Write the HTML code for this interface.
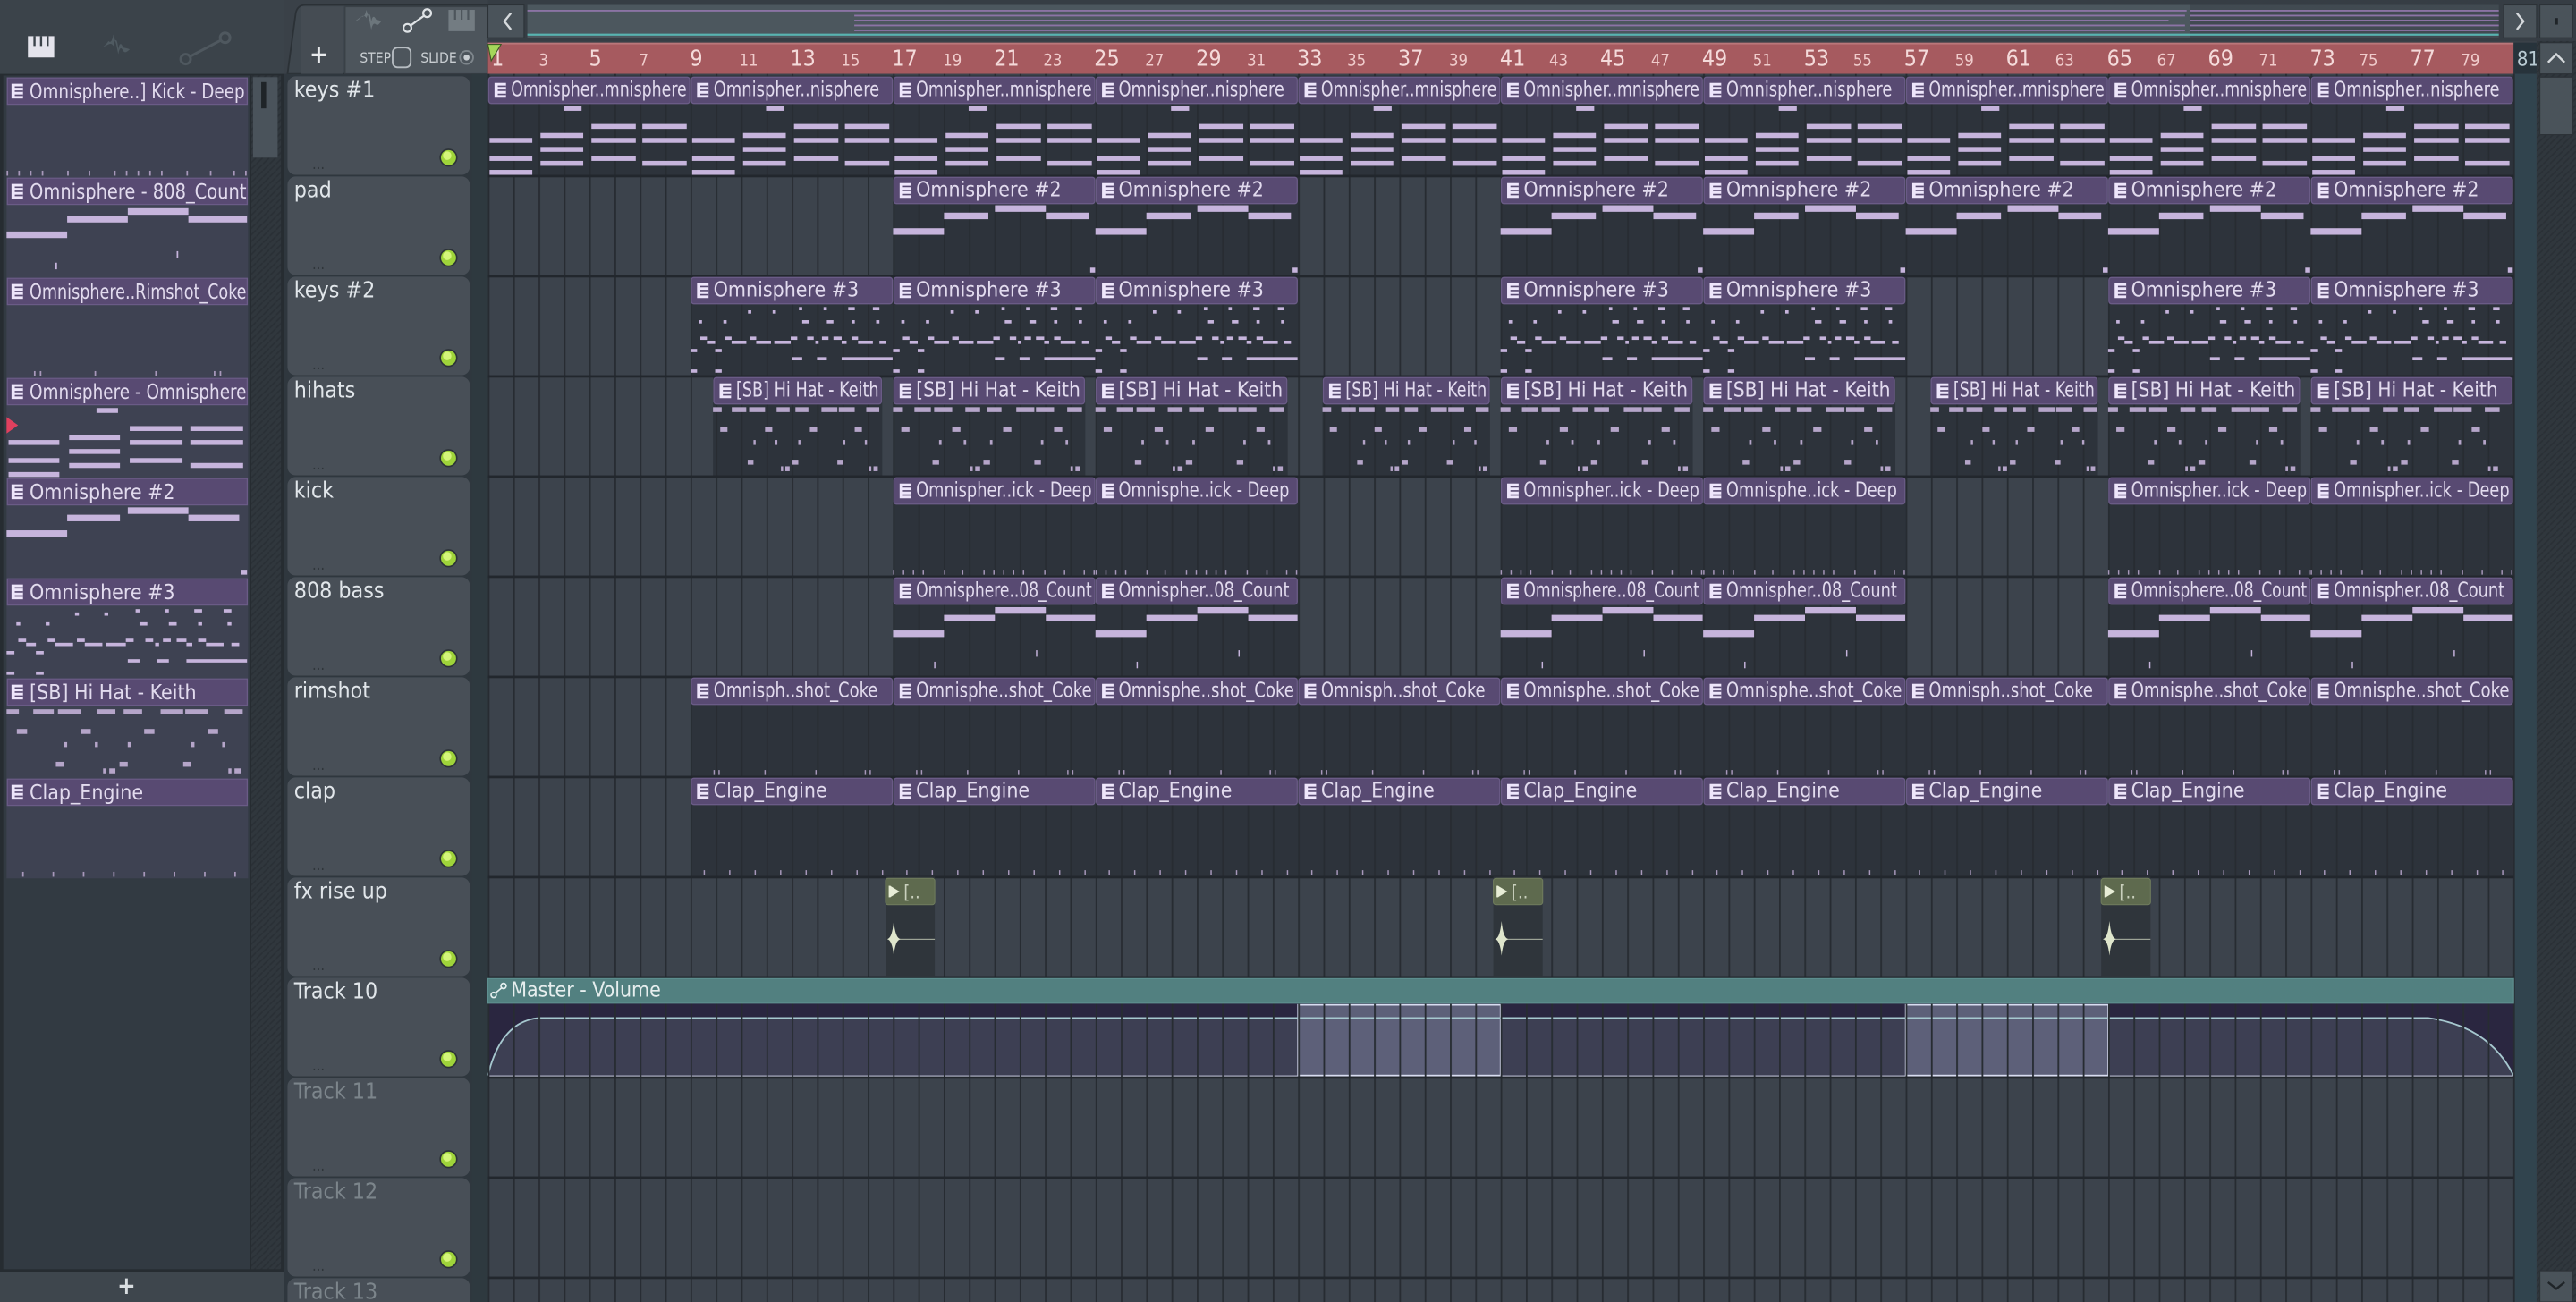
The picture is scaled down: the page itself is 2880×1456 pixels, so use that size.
<!DOCTYPE html>
<html><head><meta charset="utf-8"><style>
html,body{margin:0;padding:0;background:#3a4148;overflow:hidden}
svg{display:block}
text{font-family:"DejaVu Sans Condensed","DejaVu Sans","Liberation Sans",sans-serif;font-stretch:condensed}
</style></head><body>
<svg width="2880" height="1456" viewBox="0 0 1568 793" preserveAspectRatio="none" xmlns="http://www.w3.org/2000/svg">
<defs>
<pattern id="gl" x="297" y="0" width="15.41" height="10" patternUnits="userSpaceOnUse"><rect x="0" y="0" width="1" height="10" fill="#272c32"/></pattern>
<pattern id="hatch" width="4" height="4" patternUnits="userSpaceOnUse"><rect width="4" height="4" fill="#30373d"/><path d="M0 4L4 0" stroke="#2a3036" stroke-width="1"/></pattern>
<symbol id="ic" overflow="visible"><rect x="0" y="0" width="7" height="9" fill="#eee6fb"/><path d="M2 2h5M2 4.5h5M2 7h5" stroke="#584a72" stroke-width="0.9"/></symbol>
<symbol id="led" overflow="visible"><circle cx="0" cy="0" r="5.5" fill="#2c3238"/><circle cx="0" cy="0" r="4.6" fill="#9fd43a"/><circle cx="-0.8" cy="-1.2" r="2.6" fill="#d4f57a"/></symbol>
<g id="hdr"><rect x="0.5" y="1" width="122.3" height="16" rx="1.5" fill="#584a72" stroke="#6a5b86" stroke-width="0.7"/><use href="#ic" x="4" y="4.5"/></g>
<g id="k1" fill="#c6b4dc">
<rect x="1" y="38" width="26" height="3"/><rect x="1" y="49" width="26" height="3"/><rect x="1" y="57.5" width="26" height="3"/>
<rect x="32" y="35" width="26" height="3"/><rect x="32" y="43.5" width="26" height="3"/><rect x="32" y="52" width="26" height="3"/><rect x="46" y="18.5" width="11" height="3"/>
<rect x="63" y="29.5" width="27" height="3"/><rect x="63" y="38" width="27" height="3"/><rect x="63" y="49" width="27" height="3"/>
<rect x="94" y="29.5" width="27" height="3"/><rect x="94" y="38" width="27" height="3"/><rect x="94" y="52" width="27" height="3"/>
</g>
<g id="pd" fill="#c6b4dc"><rect x="0" y="32" width="31" height="4"/><rect x="31" y="22.5" width="27" height="4"/><rect x="62" y="18" width="31" height="4"/><rect x="93" y="22.5" width="26" height="4"/><rect x="120" y="56" width="3" height="3"/></g>
<g id="k2" fill="#c6b4dc">
<rect x="5" y="27" width="2" height="2"/><rect x="20" y="27" width="2" height="2"/><rect x="35" y="21" width="2" height="2"/><rect x="50" y="21" width="2" height="2"/><rect x="66" y="19" width="2" height="2"/><rect x="81" y="19" width="2" height="2"/><rect x="96" y="19" width="4" height="2"/><rect x="111" y="19" width="4" height="2"/><rect x="68" y="27" width="4" height="2"/><rect x="83" y="27" width="4" height="2"/><rect x="98" y="27" width="2" height="2"/><rect x="113" y="27" width="2" height="2"/>
<rect x="6" y="37" width="4" height="2"/><rect x="10" y="39.5" width="5" height="2"/><rect x="21" y="37" width="4" height="2"/><rect x="25" y="39.5" width="9" height="2"/><rect x="36" y="37" width="4" height="2"/><rect x="40" y="39.5" width="9" height="2"/><rect x="51" y="39.5" width="10" height="2"/><rect x="61" y="37" width="4" height="2"/><rect x="71" y="37" width="4" height="2"/><rect x="76" y="39.5" width="2" height="2"/><rect x="80" y="37" width="4" height="2"/><rect x="87" y="37" width="5" height="2"/><rect x="92" y="39.5" width="3" height="2"/><rect x="98" y="37" width="4" height="2"/><rect x="102" y="39.5" width="9" height="2"/><rect x="115" y="39.5" width="4" height="2"/>
<rect x="0" y="44.5" width="4" height="2"/><rect x="15" y="44.5" width="4" height="2"/><rect x="62" y="49.5" width="6" height="2"/><rect x="77" y="49.5" width="6" height="2"/><rect x="92" y="49.5" width="31" height="2"/><rect x="0" y="57" width="4" height="2"/><rect x="15" y="57" width="4" height="2"/>
</g>
<g id="hh" fill="#b5a5c9">
<rect x="0" y="19" width="6" height="3"/><rect x="13" y="19" width="10" height="3"/><rect x="25" y="19" width="11" height="3"/><rect x="44" y="19" width="9" height="3"/><rect x="57" y="19" width="9" height="3"/><rect x="75" y="19" width="11" height="3"/><rect x="87" y="19" width="11" height="3"/><rect x="106" y="19" width="9" height="3"/>
<rect x="5" y="31" width="5" height="3"/><rect x="36" y="31" width="5" height="3"/><rect x="67" y="31" width="5" height="3"/><rect x="98" y="31" width="5" height="3"/>
<rect x="28" y="39" width="1.5" height="3"/><rect x="43" y="39" width="1.5" height="3"/><rect x="59" y="39" width="1.5" height="3"/><rect x="90" y="39" width="1.5" height="3"/><rect x="105" y="39" width="1.5" height="3"/>
<rect x="24" y="51" width="4" height="3"/><rect x="55" y="51" width="4" height="3"/><rect x="86" y="51" width="4" height="3"/><rect x="47" y="55" width="1.5" height="3"/><rect x="50" y="55" width="3" height="3"/><rect x="108" y="55" width="1.5" height="3"/><rect x="111" y="55" width="3" height="3"/>
</g>
<g id="bs" fill="#c6b4dc"><rect x="0" y="33" width="31" height="4"/><rect x="31" y="23.5" width="31" height="4"/><rect x="62" y="18.8" width="31" height="4"/><rect x="93" y="23.5" width="30" height="4"/><rect x="87" y="45" width="0.8" height="4"/><rect x="25" y="52" width="0.8" height="4"/></g>
<g id="tk" fill="#a898bb"><rect x="8" y="57" width="0.8" height="3"/><rect x="23.5" y="57" width="0.8" height="3"/><rect x="39" y="57" width="0.8" height="3"/><rect x="54.5" y="57" width="0.8" height="3"/><rect x="70" y="57" width="0.8" height="3"/><rect x="85.5" y="57" width="0.8" height="3"/><rect x="101" y="57" width="0.8" height="3"/><rect x="116.5" y="57" width="0.8" height="3"/></g>
<g id="rk" fill="#a898bb"><rect x="14" y="57" width="0.8" height="3"/><rect x="17" y="57" width="0.8" height="3"/><rect x="45" y="57" width="0.8" height="3"/><rect x="76" y="57" width="0.8" height="3"/><rect x="106" y="57" width="0.8" height="3"/><rect x="109" y="57" width="0.8" height="3"/></g>
<g id="kk" fill="#a898bb"><rect x="0" y="57" width="0.8" height="3"/><rect x="6" y="57" width="0.8" height="3"/><rect x="12" y="57" width="0.8" height="3"/><rect x="18" y="57" width="0.8" height="3"/><rect x="31" y="57" width="0.8" height="3"/><rect x="42" y="57" width="0.8" height="3"/><rect x="55" y="57" width="0.8" height="3"/><rect x="61" y="57" width="0.8" height="3"/><rect x="67" y="57" width="0.8" height="3"/><rect x="73" y="57" width="0.8" height="3"/><rect x="79" y="57" width="0.8" height="3"/><rect x="92" y="57" width="0.8" height="3"/><rect x="104" y="57" width="0.8" height="3"/><rect x="116" y="57" width="0.8" height="3"/><rect x="122" y="57" width="0.8" height="3"/></g>
<g id="fx"><rect x="0" y="0" width="30" height="61" fill="#2f353b"/><rect x="0" y="1" width="30" height="16" rx="1.5" fill="#5e6a4e" stroke="#6e7b5c" stroke-width="0.6"/><path d="M2.5 5.5v7" stroke="#e7edd6" stroke-width="1.1"/><path d="M3 6l5 3-5 3z M6 9h2" fill="#e7edd6" stroke="#e7edd6" stroke-width="0.6"/><text x="11" y="13" font-size="11" fill="#c9d0bd">[..</text><path d="M1 38 Q4 37.6 5 27 Q6 37.6 9 37.8 H30 V38.2 H9 Q6 38.4 5 48 Q4 38.4 1 38z" fill="#dfe6cc"/></g>
</defs>

<rect width="1568" height="793" fill="#3a4148"/>

<!-- left panel -->
<rect x="0" y="0" width="173" height="45" fill="#3b434a"/>
<g fill="#e4e4ec"><rect x="17" y="22" width="16" height="13"/></g>
<path d="M21 22v6M25 22v6M29 22v6" stroke="#3b434a" stroke-width="1.3"/>
<path d="M62 29 q3 -2 4 -4 q2 2 3 -4 q2 6 3 12 q1 -6 3 -2 q1 2 4 -1 q-3 -1 -4 -1 q-2 -5 -3 1 q-1 -10 -3 -2 q-1 -2 -3 -1z" fill="#4f5a61"/>
<circle cx="113" cy="36" r="3" fill="none" stroke="#4f585f" stroke-width="1.6"/><circle cx="137" cy="23" r="3" fill="none" stroke="#4f585f" stroke-width="1.6"/><path d="M115.5 34.5l19 -10" stroke="#4f585f" stroke-width="1.6"/>
<rect x="0" y="45" width="173" height="730" fill="#262c31"/>
<rect x="2" y="46" width="150" height="727" fill="#323a42"/>
<rect x="153" y="46" width="18" height="727" fill="url(#hatch)"/>
<rect x="154" y="47" width="15" height="49" fill="#4a535b"/>
<rect x="159" y="50" width="3" height="16" fill="#1f2428"/>
<rect x="0" y="775" width="173" height="18" fill="#3e464d"/>
<text x="77" y="788" font-size="15" fill="#d8dde0" text-anchor="middle" font-weight="bold">+</text>

<g font-size="12.5" fill="#e2dbee">
<g transform="translate(4,47)"><rect width="147" height="61" fill="#3e4252"/><rect x="0.5" y="0.5" width="146" height="16" fill="#584a72" stroke="#6a5b86" stroke-width="0.7"/><use href="#ic" x="3" y="4"/><text x="14" y="13" textLength="131" lengthAdjust="spacingAndGlyphs">Omnisphere..] Kick - Deep</text><g transform="scale(1.19,1)"><use href="#kk"/></g></g>
<g transform="translate(4,108)"><rect width="147" height="61" fill="#3e4252"/><rect x="0.5" y="0.5" width="146" height="16" fill="#584a72" stroke="#6a5b86" stroke-width="0.7"/><use href="#ic" x="3" y="4"/><text x="14" y="13" textLength="132" lengthAdjust="spacingAndGlyphs">Omnisphere - 808_Count</text><g transform="scale(1.19,1)"><use href="#bs"/></g></g>
<g transform="translate(4,169)"><rect width="147" height="61" fill="#3e4252"/><rect x="0.5" y="0.5" width="146" height="16" fill="#584a72" stroke="#6a5b86" stroke-width="0.7"/><use href="#ic" x="3" y="4"/><text x="14" y="13" textLength="132" lengthAdjust="spacingAndGlyphs">Omnisphere..Rimshot_Coke</text><g transform="scale(1.19,1)"><use href="#rk"/></g></g>
<g transform="translate(4,230)"><rect width="147" height="61" fill="#3e4252"/><rect x="0.5" y="0.5" width="146" height="16" fill="#584a72" stroke="#6a5b86" stroke-width="0.7"/><use href="#ic" x="3" y="4"/><text x="14" y="13" textLength="132" lengthAdjust="spacingAndGlyphs">Omnisphere - Omnisphere</text><g transform="scale(1.19,1)"><use href="#k1"/></g></g>
<g transform="translate(4,291)"><rect width="147" height="61" fill="#3e4252"/><rect x="0.5" y="0.5" width="146" height="16" fill="#584a72" stroke="#6a5b86" stroke-width="0.7"/><use href="#ic" x="3" y="4"/><text x="14" y="13">Omnisphere #2</text><g transform="scale(1.19,1)"><use href="#pd"/></g></g>
<g transform="translate(4,352)"><rect width="147" height="61" fill="#3e4252"/><rect x="0.5" y="0.5" width="146" height="16" fill="#584a72" stroke="#6a5b86" stroke-width="0.7"/><use href="#ic" x="3" y="4"/><text x="14" y="13">Omnisphere #3</text><g transform="scale(1.19,1)"><use href="#k2"/></g></g>
<g transform="translate(4,413)"><rect width="147" height="61" fill="#3e4252"/><rect x="0.5" y="0.5" width="146" height="16" fill="#584a72" stroke="#6a5b86" stroke-width="0.7"/><use href="#ic" x="3" y="4"/><text x="14" y="13">[SB] Hi Hat - Keith</text><g transform="scale(1.25,1)"><use href="#hh"/></g></g>
<g transform="translate(4,474)"><rect width="147" height="61" fill="#3e4252"/><rect x="0.5" y="0.5" width="146" height="16" fill="#584a72" stroke="#6a5b86" stroke-width="0.7"/><use href="#ic" x="3" y="4"/><text x="14" y="13">Clap_Engine</text><g transform="scale(1.19,1)"><use href="#tk"/></g></g>
</g>
<path d="M4 254l7 5-7 5z" fill="#e0405e"/>

<!-- top tabs -->
<path d="M175 45 L180 8 Q181 3 186 3 L297 3 L297 45z" fill="#3f474e" stroke="#2b3136" stroke-width="1"/>
<rect x="183" y="4" width="26" height="41" fill="#454c53"/>
<text x="194" y="38" font-size="15" fill="#e8eaec" text-anchor="middle" font-weight="bold">+</text>
<rect x="210" y="4" width="87" height="41" fill="#4d555c" stroke="#3a4147" stroke-width="0.8"/>
<path d="M216 13 q3 -1 4 -3 q2 1 3 -4 q2 6 3 12 q1 -5 3 -3 q1 1 3 -2 q-2 -1 -3 -1 q-2 -4 -3 1 q-1 -8 -3 -2 q-1 -2 -3 -1z" fill="#6c767c"/>
<circle cx="248" cy="17" r="2.4" fill="none" stroke="#dfe3e6" stroke-width="1.2"/><circle cx="260" cy="8" r="2.4" fill="none" stroke="#dfe3e6" stroke-width="1.2"/><path d="M250 15.5l8.2 -6" stroke="#dfe3e6" stroke-width="1.2"/>
<rect x="273" y="6" width="16" height="13" fill="#737c82"/><path d="M277 6v6M281 6v6M285 6v6" stroke="#4d555c" stroke-width="1.2"/>
<text x="219" y="38" font-size="8.5" fill="#c9ced2">STEP</text>
<rect x="239" y="29" width="11" height="12" rx="3" fill="none" stroke="#b7bdc2" stroke-width="1"/>
<text x="256" y="38" font-size="8.5" fill="#c9ced2">SLIDE</text>
<circle cx="284" cy="35" r="4" fill="none" stroke="#7e868c" stroke-width="1"/><circle cx="284" cy="35" r="1.8" fill="#c9ced2"/>

<!-- overview strip -->
<rect x="297" y="0" width="1271" height="25" fill="#363d44"/>
<rect x="297" y="3" width="22" height="20" fill="#4a535a" stroke="#2c3237" stroke-width="0.6"/>
<path d="M311 8l-4 5 4 5" fill="none" stroke="#d6dadd" stroke-width="1.3"/>
<rect x="321" y="3" width="1012" height="20" fill="#4c575e"/>
<rect x="1333" y="3" width="188" height="20" fill="#414a51"/>
<g fill="#8c74a6">
<rect x="321" y="6" width="1010" height="1"/><rect x="520" y="9" width="810" height="1"/><rect x="520" y="12" width="800" height="1"/><rect x="520" y="15" width="810" height="1"/><rect x="520" y="18" width="810" height="1"/>
<rect x="1333" y="6" width="188" height="1"/><rect x="1333" y="9" width="188" height="1"/><rect x="1333" y="12" width="188" height="1"/><rect x="1333" y="15" width="188" height="1"/><rect x="1333" y="18" width="188" height="1"/>
</g>
<rect x="321" y="20.5" width="1200" height="1.2" fill="#58b3b0"/>
<rect x="1524" y="3" width="20" height="20" fill="#4a535a" stroke="#2c3237" stroke-width="0.6"/>
<path d="M1532 8l4 5-4 5" fill="none" stroke="#d6dadd" stroke-width="1.3"/>
<rect x="1546" y="3" width="20" height="20" fill="#4a535a" stroke="#2c3237" stroke-width="0.6"/><rect x="1555" y="11" width="2" height="4" fill="#1f2428"/>

<!-- ruler -->
<rect x="297" y="26" width="1233" height="19" fill="#a65a5f"/>
<rect x="297" y="26" width="1233" height="1" fill="#b9777a"/>
<rect x="1530" y="26" width="15" height="19" fill="#27333b"/>
<text x="1532" y="40" font-size="12" fill="#b9cbd3">81</text>
<g fill="#f4dada" font-size="13.5">
<text x="299" y="40">1</text><text x="358.5" y="40">5</text><text x="420" y="40">9</text><text x="481" y="40">13</text><text x="543" y="40">17</text><text x="605" y="40">21</text><text x="666" y="40">25</text><text x="728" y="40">29</text><text x="789.5" y="40">33</text><text x="851" y="40">37</text><text x="913" y="40">41</text><text x="974" y="40">45</text><text x="1036" y="40">49</text><text x="1098" y="40">53</text><text x="1159" y="40">57</text><text x="1221" y="40">61</text><text x="1282.5" y="40">65</text><text x="1344" y="40">69</text><text x="1406" y="40">73</text><text x="1467" y="40">77</text>
</g>
<g fill="#f0cccc" font-size="10">
<text x="328" y="40">3</text><text x="389" y="40">7</text><text x="450" y="40">11</text><text x="512" y="40">15</text><text x="574" y="40">19</text><text x="635" y="40">23</text><text x="697" y="40">27</text><text x="759" y="40">31</text><text x="820" y="40">35</text><text x="882" y="40">39</text><text x="943" y="40">43</text><text x="1005" y="40">47</text><text x="1067" y="40">51</text><text x="1128" y="40">55</text><text x="1190" y="40">59</text><text x="1251" y="40">63</text><text x="1313" y="40">67</text><text x="1375" y="40">71</text><text x="1436" y="40">75</text><text x="1498" y="40">79</text>
</g>
<path d="M297 27h8l-6 10z" fill="#a4d65a" stroke="#3e5a26" stroke-width="0.6"/>

<!-- right scrollbar -->
<rect x="1530" y="45" width="14" height="748" fill="#31444e"/>
<rect x="1544" y="25" width="24" height="768" fill="url(#hatch)"/>
<rect x="1546" y="26" width="20" height="19" fill="#4a535a" stroke="#2c3237" stroke-width="0.6"/><path d="M1551 38l5-5 5 5" fill="none" stroke="#d6dadd" stroke-width="1.3"/>
<rect x="1546" y="47" width="20" height="35" fill="#4a535a" stroke="#2c3237" stroke-width="0.6"/>
<rect x="1546" y="774" width="20" height="19" fill="#4a535a" stroke="#2c3237" stroke-width="0.6"/><path d="M1551 781l5 4 5-4" fill="none" stroke="#1f2428" stroke-width="1.3"/>

<!-- track header column -->
<rect x="173" y="45" width="124" height="748" fill="#2f373e"/>
<rect x="287" y="45" width="10" height="748" fill="#2e393f"/>
<g fill="#484f57">
<rect x="175" y="46.5" width="111" height="60" rx="5"/><rect x="175" y="107.5" width="111" height="60" rx="5"/><rect x="175" y="168.5" width="111" height="60" rx="5"/><rect x="175" y="229.5" width="111" height="60" rx="5"/><rect x="175" y="290.5" width="111" height="60" rx="5"/><rect x="175" y="351.5" width="111" height="60" rx="5"/><rect x="175" y="412.5" width="111" height="60" rx="5"/><rect x="175" y="473.5" width="111" height="60" rx="5"/><rect x="175" y="534.5" width="111" height="60" rx="5"/><rect x="175" y="595.5" width="111" height="60" rx="5"/><rect x="175" y="656.5" width="111" height="60" rx="5"/><rect x="175" y="717.5" width="111" height="60" rx="5"/><rect x="175" y="778.5" width="111" height="20" rx="5"/>
</g>
<g font-size="13.5" fill="#e1e6ea">
<text x="179" y="59">keys #1</text><text x="179" y="120">pad</text><text x="179" y="181">keys #2</text><text x="179" y="242">hihats</text><text x="179" y="303">kick</text><text x="179" y="364">808 bass</text><text x="179" y="425">rimshot</text><text x="179" y="486">clap</text><text x="179" y="547">fx rise up</text><text x="179" y="608">Track 10</text>
</g>
<g font-size="13.5" fill="#7c858b"><text x="179" y="669">Track 11</text><text x="179" y="730">Track 12</text><text x="179" y="791">Track 13</text></g>
<g fill="#2f353a" font-size="9">
<text x="190" y="103">...</text><text x="190" y="164">...</text><text x="190" y="225">...</text><text x="190" y="286">...</text><text x="190" y="347">...</text><text x="190" y="408">...</text><text x="190" y="469">...</text><text x="190" y="530">...</text><text x="190" y="591">...</text><text x="190" y="652">...</text><text x="190" y="713">...</text><text x="190" y="774">...</text>
</g>
<use href="#led" x="273" y="96"/><use href="#led" x="273" y="157"/><use href="#led" x="273" y="218"/><use href="#led" x="273" y="279"/><use href="#led" x="273" y="340"/><use href="#led" x="273" y="401"/><use href="#led" x="273" y="462"/><use href="#led" x="273" y="523"/><use href="#led" x="273" y="584"/><use href="#led" x="273" y="645"/><use href="#led" x="273" y="706"/><use href="#led" x="273" y="767"/>

<!-- grid -->
<rect x="297" y="45" width="1233" height="748" fill="#3c434c"/>
<g fill="#2d333b">
<rect x="297" y="46" width="1233" height="61"/>
<rect x="543.6" y="107" width="246.6" height="61"/><rect x="913.4" y="107" width="246.6" height="61"/><rect x="1160" y="107" width="123.2" height="61"/><rect x="1283.2" y="107" width="246.6" height="61"/>
<rect x="420.3" y="168" width="369.9" height="61"/><rect x="913.4" y="168" width="246.6" height="61"/><rect x="1283.2" y="168" width="246.6" height="61"/>
<rect x="434" y="229" width="103" height="61"/><rect x="543.6" y="229" width="117" height="61"/><rect x="666.8" y="229" width="117" height="61"/><rect x="805" y="229" width="102" height="61"/><rect x="913.4" y="229" width="117" height="61"/><rect x="1036.7" y="229" width="117" height="61"/><rect x="1175" y="229" width="102" height="61"/><rect x="1283.2" y="229" width="117" height="61"/><rect x="1406.5" y="229" width="123.3" height="61"/>
<rect x="543.6" y="290" width="246.6" height="122"/><rect x="913.4" y="290" width="246.6" height="122"/><rect x="1283.2" y="290" width="246.6" height="122"/>
<rect x="420.3" y="412" width="1109.5" height="122"/>
</g>
<rect x="297" y="611" width="1233" height="45" fill="#2a2640"/>
<path d="M297 655 Q305 622 328 620 H1478 Q1515 625 1530 655z" fill="#3d3f53"/>
<rect x="790.1" y="612" width="123.3" height="43" fill="#5d6079" stroke="#d8dcf0" stroke-width="0.9"/>
<rect x="1160" y="612" width="123.3" height="43" fill="#5d6079" stroke="#d8dcf0" stroke-width="0.9"/>
<path d="M297 655 Q305 622 328 620 H1478 Q1515 625 1530 655" fill="none" stroke="#a6c8cf" stroke-width="1"/>
<path d="M297 655.5 H1530" stroke="#d8dcf0" stroke-width="1"/>
<rect x="297" y="45" width="1234" height="748" fill="url(#gl)"/>
<g fill="#22272d">
<rect x="297" y="106.5" width="1233" height="1.5"/><rect x="297" y="167.5" width="1233" height="1.5"/><rect x="297" y="228.5" width="1233" height="1.5"/><rect x="297" y="289.5" width="1233" height="1.5"/><rect x="297" y="350.5" width="1233" height="1.5"/><rect x="297" y="411.5" width="1233" height="1.5"/><rect x="297" y="472.5" width="1233" height="1.5"/><rect x="297" y="533.5" width="1233" height="1.5"/><rect x="297" y="594.5" width="1233" height="1.5"/><rect x="297" y="655.5" width="1233" height="1.5"/><rect x="297" y="716.5" width="1233" height="1.5"/><rect x="297" y="777.5" width="1233" height="1.5"/>
</g>
<rect x="297" y="596" width="1233" height="15" fill="#528080" stroke="#5f9090" stroke-width="0.6"/>
<circle cx="300.5" cy="606" r="1.6" fill="none" stroke="#e6f0f0" stroke-width="0.9"/><circle cx="306.5" cy="600.5" r="1.6" fill="none" stroke="#e6f0f0" stroke-width="0.9"/><path d="M301.6 604.8l3.8-3.2" stroke="#e6f0f0" stroke-width="0.9"/>
<text x="311" y="607" font-size="12.5" fill="#e6eeee">Master - Volume</text>

<g font-size="12.5" fill="#e2dbee">
<g transform="translate(297,46)"><use href="#hdr"/><use href="#k1"/><text x="14" y="12.5" textLength="107" lengthAdjust="spacingAndGlyphs">Omnispher..mnisphere</text></g>
<g transform="translate(420.3,46)"><use href="#hdr"/><use href="#k1"/><text x="14" y="12.5" textLength="101" lengthAdjust="spacingAndGlyphs">Omnispher..nisphere</text></g>
<g transform="translate(543.6,46)"><use href="#hdr"/><use href="#k1"/><text x="14" y="12.5" textLength="107" lengthAdjust="spacingAndGlyphs">Omnispher..mnisphere</text></g>
<g transform="translate(666.8,46)"><use href="#hdr"/><use href="#k1"/><text x="14" y="12.5" textLength="101" lengthAdjust="spacingAndGlyphs">Omnispher..nisphere</text></g>
<g transform="translate(790.1,46)"><use href="#hdr"/><use href="#k1"/><text x="14" y="12.5" textLength="107" lengthAdjust="spacingAndGlyphs">Omnispher..mnisphere</text></g>
<g transform="translate(913.4,46)"><use href="#hdr"/><use href="#k1"/><text x="14" y="12.5" textLength="107" lengthAdjust="spacingAndGlyphs">Omnispher..mnisphere</text></g>
<g transform="translate(1036.7,46)"><use href="#hdr"/><use href="#k1"/><text x="14" y="12.5" textLength="101" lengthAdjust="spacingAndGlyphs">Omnispher..nisphere</text></g>
<g transform="translate(1160,46)"><use href="#hdr"/><use href="#k1"/><text x="14" y="12.5" textLength="107" lengthAdjust="spacingAndGlyphs">Omnispher..mnisphere</text></g>
<g transform="translate(1283.2,46)"><use href="#hdr"/><use href="#k1"/><text x="14" y="12.5" textLength="107" lengthAdjust="spacingAndGlyphs">Omnispher..mnisphere</text></g>
<g transform="translate(1406.5,46)"><use href="#hdr"/><use href="#k1"/><text x="14" y="12.5" textLength="101" lengthAdjust="spacingAndGlyphs">Omnispher..nisphere</text></g>

<g transform="translate(543.6,107)"><use href="#hdr"/><use href="#pd"/><text x="14" y="12.5">Omnisphere #2</text></g>
<g transform="translate(666.8,107)"><use href="#hdr"/><use href="#pd"/><text x="14" y="12.5">Omnisphere #2</text></g>
<g transform="translate(913.4,107)"><use href="#hdr"/><use href="#pd"/><text x="14" y="12.5">Omnisphere #2</text></g>
<g transform="translate(1036.7,107)"><use href="#hdr"/><use href="#pd"/><text x="14" y="12.5">Omnisphere #2</text></g>
<g transform="translate(1160,107)"><use href="#hdr"/><use href="#pd"/><text x="14" y="12.5">Omnisphere #2</text></g>
<g transform="translate(1283.2,107)"><use href="#hdr"/><use href="#pd"/><text x="14" y="12.5">Omnisphere #2</text></g>
<g transform="translate(1406.5,107)"><use href="#hdr"/><use href="#pd"/><text x="14" y="12.5">Omnisphere #2</text></g>

<g transform="translate(420.3,168)"><use href="#hdr"/><use href="#k2"/><text x="14" y="12.5">Omnisphere #3</text></g>
<g transform="translate(543.6,168)"><use href="#hdr"/><use href="#k2"/><text x="14" y="12.5">Omnisphere #3</text></g>
<g transform="translate(666.8,168)"><use href="#hdr"/><use href="#k2"/><text x="14" y="12.5">Omnisphere #3</text></g>
<g transform="translate(913.4,168)"><use href="#hdr"/><use href="#k2"/><text x="14" y="12.5">Omnisphere #3</text></g>
<g transform="translate(1036.7,168)"><use href="#hdr"/><use href="#k2"/><text x="14" y="12.5">Omnisphere #3</text></g>
<g transform="translate(1283.2,168)"><use href="#hdr"/><use href="#k2"/><text x="14" y="12.5">Omnisphere #3</text></g>
<g transform="translate(1406.5,168)"><use href="#hdr"/><use href="#k2"/><text x="14" y="12.5">Omnisphere #3</text></g>

<g transform="translate(434,229)"><rect x="0.5" y="1" width="102" height="16" rx="1.5" fill="#584a72" stroke="#6a5b86" stroke-width="0.7"/><use href="#ic" x="4" y="4.5"/><use href="#hh" transform="scale(0.88,1)"/><text x="14" y="12.5" textLength="87" lengthAdjust="spacingAndGlyphs">[SB] Hi Hat - Keith</text></g>
<g transform="translate(543.6,229)"><rect x="0.5" y="1" width="116" height="16" rx="1.5" fill="#584a72" stroke="#6a5b86" stroke-width="0.7"/><use href="#ic" x="4" y="4.5"/><use href="#hh"/><text x="14" y="12.5" textLength="100" lengthAdjust="spacingAndGlyphs">[SB] Hi Hat - Keith</text></g>
<g transform="translate(666.8,229)"><rect x="0.5" y="1" width="116" height="16" rx="1.5" fill="#584a72" stroke="#6a5b86" stroke-width="0.7"/><use href="#ic" x="4" y="4.5"/><use href="#hh"/><text x="14" y="12.5" textLength="100" lengthAdjust="spacingAndGlyphs">[SB] Hi Hat - Keith</text></g>
<g transform="translate(805,229)"><rect x="0.5" y="1" width="101" height="16" rx="1.5" fill="#584a72" stroke="#6a5b86" stroke-width="0.7"/><use href="#ic" x="4" y="4.5"/><use href="#hh" transform="scale(0.88,1)"/><text x="14" y="12.5" textLength="86" lengthAdjust="spacingAndGlyphs">[SB] Hi Hat - Keith</text></g>
<g transform="translate(913.4,229)"><rect x="0.5" y="1" width="116" height="16" rx="1.5" fill="#584a72" stroke="#6a5b86" stroke-width="0.7"/><use href="#ic" x="4" y="4.5"/><use href="#hh"/><text x="14" y="12.5" textLength="100" lengthAdjust="spacingAndGlyphs">[SB] Hi Hat - Keith</text></g>
<g transform="translate(1036.7,229)"><rect x="0.5" y="1" width="116" height="16" rx="1.5" fill="#584a72" stroke="#6a5b86" stroke-width="0.7"/><use href="#ic" x="4" y="4.5"/><use href="#hh"/><text x="14" y="12.5" textLength="100" lengthAdjust="spacingAndGlyphs">[SB] Hi Hat - Keith</text></g>
<g transform="translate(1175,229)"><rect x="0.5" y="1" width="101" height="16" rx="1.5" fill="#584a72" stroke="#6a5b86" stroke-width="0.7"/><use href="#ic" x="4" y="4.5"/><use href="#hh" transform="scale(0.88,1)"/><text x="14" y="12.5" textLength="86" lengthAdjust="spacingAndGlyphs">[SB] Hi Hat - Keith</text></g>
<g transform="translate(1283.2,229)"><rect x="0.5" y="1" width="116" height="16" rx="1.5" fill="#584a72" stroke="#6a5b86" stroke-width="0.7"/><use href="#ic" x="4" y="4.5"/><use href="#hh"/><text x="14" y="12.5" textLength="100" lengthAdjust="spacingAndGlyphs">[SB] Hi Hat - Keith</text></g>
<g transform="translate(1406.5,229)"><rect x="0.5" y="1" width="122" height="16" rx="1.5" fill="#584a72" stroke="#6a5b86" stroke-width="0.7"/><use href="#ic" x="4" y="4.5"/><use href="#hh"/><text x="14" y="12.5" textLength="100" lengthAdjust="spacingAndGlyphs">[SB] Hi Hat - Keith</text></g>

<g transform="translate(543.6,290)"><use href="#hdr"/><use href="#kk"/><text x="14" y="12.5" textLength="107" lengthAdjust="spacingAndGlyphs">Omnispher..ick - Deep</text></g>
<g transform="translate(666.8,290)"><use href="#hdr"/><use href="#kk"/><text x="14" y="12.5" textLength="104" lengthAdjust="spacingAndGlyphs">Omnisphe..ick - Deep</text></g>
<g transform="translate(913.4,290)"><use href="#hdr"/><use href="#kk"/><text x="14" y="12.5" textLength="107" lengthAdjust="spacingAndGlyphs">Omnispher..ick - Deep</text></g>
<g transform="translate(1036.7,290)"><use href="#hdr"/><use href="#kk"/><text x="14" y="12.5" textLength="104" lengthAdjust="spacingAndGlyphs">Omnisphe..ick - Deep</text></g>
<g transform="translate(1283.2,290)"><use href="#hdr"/><use href="#kk"/><text x="14" y="12.5" textLength="107" lengthAdjust="spacingAndGlyphs">Omnispher..ick - Deep</text></g>
<g transform="translate(1406.5,290)"><use href="#hdr"/><use href="#kk"/><text x="14" y="12.5" textLength="107" lengthAdjust="spacingAndGlyphs">Omnispher..ick - Deep</text></g>

<g transform="translate(543.6,351)"><use href="#hdr"/><use href="#bs"/><text x="14" y="12.5" textLength="107" lengthAdjust="spacingAndGlyphs">Omnisphere..08_Count</text></g>
<g transform="translate(666.8,351)"><use href="#hdr"/><use href="#bs"/><text x="14" y="12.5" textLength="104" lengthAdjust="spacingAndGlyphs">Omnispher..08_Count</text></g>
<g transform="translate(913.4,351)"><use href="#hdr"/><use href="#bs"/><text x="14" y="12.5" textLength="107" lengthAdjust="spacingAndGlyphs">Omnisphere..08_Count</text></g>
<g transform="translate(1036.7,351)"><use href="#hdr"/><use href="#bs"/><text x="14" y="12.5" textLength="104" lengthAdjust="spacingAndGlyphs">Omnispher..08_Count</text></g>
<g transform="translate(1283.2,351)"><use href="#hdr"/><use href="#bs"/><text x="14" y="12.5" textLength="107" lengthAdjust="spacingAndGlyphs">Omnisphere..08_Count</text></g>
<g transform="translate(1406.5,351)"><use href="#hdr"/><use href="#bs"/><text x="14" y="12.5" textLength="104" lengthAdjust="spacingAndGlyphs">Omnispher..08_Count</text></g>

<g transform="translate(420.3,412)"><use href="#hdr"/><use href="#rk"/><text x="14" y="12.5" textLength="100" lengthAdjust="spacingAndGlyphs">Omnisph..shot_Coke</text></g>
<g transform="translate(543.6,412)"><use href="#hdr"/><use href="#rk"/><text x="14" y="12.5" textLength="107" lengthAdjust="spacingAndGlyphs">Omnisphe..shot_Coke</text></g>
<g transform="translate(666.8,412)"><use href="#hdr"/><use href="#rk"/><text x="14" y="12.5" textLength="107" lengthAdjust="spacingAndGlyphs">Omnisphe..shot_Coke</text></g>
<g transform="translate(790.1,412)"><use href="#hdr"/><use href="#rk"/><text x="14" y="12.5" textLength="100" lengthAdjust="spacingAndGlyphs">Omnisph..shot_Coke</text></g>
<g transform="translate(913.4,412)"><use href="#hdr"/><use href="#rk"/><text x="14" y="12.5" textLength="107" lengthAdjust="spacingAndGlyphs">Omnisphe..shot_Coke</text></g>
<g transform="translate(1036.7,412)"><use href="#hdr"/><use href="#rk"/><text x="14" y="12.5" textLength="107" lengthAdjust="spacingAndGlyphs">Omnisphe..shot_Coke</text></g>
<g transform="translate(1160,412)"><use href="#hdr"/><use href="#rk"/><text x="14" y="12.5" textLength="100" lengthAdjust="spacingAndGlyphs">Omnisph..shot_Coke</text></g>
<g transform="translate(1283.2,412)"><use href="#hdr"/><use href="#rk"/><text x="14" y="12.5" textLength="107" lengthAdjust="spacingAndGlyphs">Omnisphe..shot_Coke</text></g>
<g transform="translate(1406.5,412)"><use href="#hdr"/><use href="#rk"/><text x="14" y="12.5" textLength="107" lengthAdjust="spacingAndGlyphs">Omnisphe..shot_Coke</text></g>

<g transform="translate(420.3,473)"><use href="#hdr"/><use href="#tk"/><text x="14" y="12.5">Clap_Engine</text></g>
<g transform="translate(543.6,473)"><use href="#hdr"/><use href="#tk"/><text x="14" y="12.5">Clap_Engine</text></g>
<g transform="translate(666.8,473)"><use href="#hdr"/><use href="#tk"/><text x="14" y="12.5">Clap_Engine</text></g>
<g transform="translate(790.1,473)"><use href="#hdr"/><use href="#tk"/><text x="14" y="12.5">Clap_Engine</text></g>
<g transform="translate(913.4,473)"><use href="#hdr"/><use href="#tk"/><text x="14" y="12.5">Clap_Engine</text></g>
<g transform="translate(1036.7,473)"><use href="#hdr"/><use href="#tk"/><text x="14" y="12.5">Clap_Engine</text></g>
<g transform="translate(1160,473)"><use href="#hdr"/><use href="#tk"/><text x="14" y="12.5">Clap_Engine</text></g>
<g transform="translate(1283.2,473)"><use href="#hdr"/><use href="#tk"/><text x="14" y="12.5">Clap_Engine</text></g>
<g transform="translate(1406.5,473)"><use href="#hdr"/><use href="#tk"/><text x="14" y="12.5">Clap_Engine</text></g>
</g>

<use href="#fx" x="539" y="534"/><use href="#fx" x="909" y="534"/><use href="#fx" x="1279" y="534"/>
</svg>
</body></html>
